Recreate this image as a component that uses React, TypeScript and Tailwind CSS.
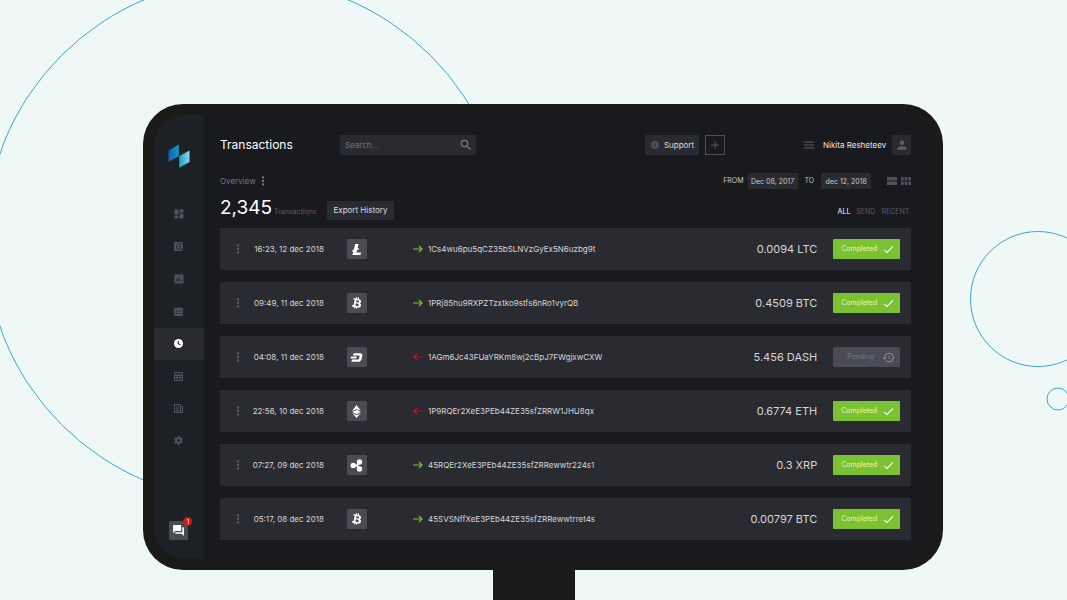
import {
  MdAssessment,
  MdCheck,
  MdDashboard,
  MdError,
  MdForum,
  MdHistory,
  MdMenu,
  MdMoreVert,
  MdPerson,
  MdSearch,
} from "react-icons/md"
import { FaBtc, FaCog } from "react-icons/fa"

type Coin = "LTC" | "BTC" | "DASH" | "ETH" | "XRP"

type Transaction = {
  date: string
  coin: Coin
  incoming: boolean
  hash: string
  amount: string
  pending?: boolean
}

const transactions: Transaction[] = [
  { date: "16:23, 12 dec 2018", coin: "LTC", incoming: false, hash: "1Cs4wu6pu5qCZ35bSLNVzGyEx5N6uzbg9t", amount: "0.0094" },
  { date: "09:49, 11 dec 2018", coin: "BTC", incoming: false, hash: "1PRj85hu9RXPZTzxtko9stfs6nRo1vyrQB", amount: "0.4509" },
  { date: "04:08, 11 dec 2018", coin: "DASH", incoming: true, hash: "1AGm6Jc43FUaYRKm8wj2cBpJ7FWgjxwCXW", amount: "5.456", pending: true },
  { date: "22:56, 10 dec 2018", coin: "ETH", incoming: true, hash: "1P9RQEr2XeE3PEb44ZE35sfZRRW1JHU8qx", amount: "0.6774" },
  { date: "07:27, 09 dec 2018", coin: "XRP", incoming: false, hash: "45RQEr2XeE3PEb44ZE35sfZRRewwtr224s1", amount: "0.3" },
  { date: "05:17, 08 dec 2018", coin: "BTC", incoming: false, hash: "45SVSNffXeE3PEb44ZE35sfZRRewwtrret4s", amount: "0.00797" },
]

function Logo() {
  return (
    <svg viewBox="0 0 22 24" className="h-6 w-[22px]" aria-hidden="true">
      <defs>
        <linearGradient id="logo-left" x1="0" x2="1">
          <stop offset="0" stopColor="#0d5fb4" />
          <stop offset="1" stopColor="#0f9cc4" />
        </linearGradient>
        <linearGradient id="logo-right" x1="0" x2="1">
          <stop offset="0" stopColor="#12a3c6" />
          <stop offset="1" stopColor="#8fd6df" />
        </linearGradient>
      </defs>
      <path d="M0.500 6.500 10.800 0.500V12L0.500 18z" fill="url(#logo-left)" />
      <path d="M11.200 12 21.500 6.500V18L11.200 23.700z" fill="url(#logo-right)" />
    </svg>
  )
}

function WalletIcon() {
  return (
    <svg viewBox="0 0 18 18" className="size-[9px]" fill="currentColor" aria-hidden="true">
      <path d="M2 0h14a2 2 0 0 1 2 2v1H8a3 3 0 0 0-3 3v6a3 3 0 0 0 3 3h10v1a2 2 0 0 1-2 2H2a2 2 0 0 1-2-2V2a2 2 0 0 1 2-2z" />
      <path fillRule="evenodd" d="M8 4.500h10v9H8a1.500 1.500 0 0 1-1.500-1.500V6A1.500 1.500 0 0 1 8 4.500zM12 7a2 2 0 1 0 0 4 2 2 0 0 0 0-4z" />
    </svg>
  )
}

function CalendarIcon() {
  return (
    <svg viewBox="0 0 18 18" className="size-[9px]" fill="currentColor" aria-hidden="true">
      <path
        fillRule="evenodd"
        d="M3 0h2v2h3V0h2v2h3V0h2v2h1a2 2 0 0 1 2 2v12a2 2 0 0 1-2 2H2a2 2 0 0 1-2-2V4a2 2 0 0 1 2-2h1zM3 7v2h3V7zm5 0v2h2V7zm4 0v2h3V7zM3 12v2h3v-2zm5 0v2h2v-2zm4 0v2h3v-2z"
      />
    </svg>
  )
}

function ClockIcon() {
  return (
    <svg viewBox="0 0 18 18" className="size-[9px]" aria-hidden="true">
      <circle cx="9" cy="9" r="9" fill="currentColor" />
      <path d="M8.500 4v5.500l4.500 2" fill="none" stroke="#2a2b30" strokeWidth="2.200" />
    </svg>
  )
}

function TableIcon() {
  return (
    <svg viewBox="0 0 18 18" className="size-[9px]" fill="currentColor" aria-hidden="true">
      <path fillRule="evenodd" d="M0 0h18v18H0zM2 2v3h14V2zm0 6v2h3V8zm5 0v2h4V8zm6 0v2h3V8zM2 12v4h3v-4zm5 0v4h4v-4zm6 0v4h3v-4z" />
    </svg>
  )
}

function NewsIcon() {
  return (
    <svg viewBox="0 0 18 18" className="size-[9px]" fill="none" stroke="currentColor" strokeWidth="2.200" aria-hidden="true">
      <path d="M13 6V2L11 1H1v16h14a2 2 0 0 0 2-2V6h-4v9a2 2 0 0 0 2 2M4 6h6M4 10h6M4 13.500h6" />
    </svg>
  )
}

function ListViewIcon() {
  return (
    <svg viewBox="0 0 10 8" className="h-2 w-2.5" fill="currentColor" aria-hidden="true">
      <path d="M0 0h10v3.500H0zM0 4.500h10V8H0z" />
    </svg>
  )
}

function GridViewIcon() {
  return (
    <svg viewBox="0 0 10 8" className="h-2 w-2.5" fill="currentColor" aria-hidden="true">
      <path d="M0 0h2.700v3.500H0zM3.600 0h2.800v3.500H3.600zM7.300 0H10v3.500H7.300zM0 4.500h2.700V8H0zM3.600 4.500h2.800V8H3.600zM7.300 4.500H10V8H7.300z" />
    </svg>
  )
}

const navItems = [
  { label: "Dashboard", icon: <MdDashboard className="size-3" /> },
  { label: "Wallet", icon: <WalletIcon /> },
  { label: "Statistics", icon: <MdAssessment className="size-3" /> },
  { label: "Calendar", icon: <CalendarIcon /> },
  { label: "History", icon: <ClockIcon />, active: true },
  { label: "Table", icon: <TableIcon /> },
  { label: "News", icon: <NewsIcon /> },
  { label: "Settings", icon: <FaCog className="size-[9px]" /> },
]

function CoinIcon({ coin }: { coin: Coin }) {
  if (coin === "BTC") return <FaBtc className="size-3 rotate-12" aria-label="Bitcoin" />
  return (
    <svg viewBox="0 0 24 24" className="size-[13px]" fill="currentColor" role="img" aria-label={coin}>
      {coin === "LTC" && <path d="M9.500 2h6.500l-2.200 8 2.700-1-.9 3.500-2.700 1L12 17.500h8.500L19.300 22H4.500l1.700-6.500-2.400.9.900-3.500 2.400-.9z" />}
      {coin === "DASH" && (
        <>
          <path d="M6.500 4h12c3.500 0 5 2 4.200 5l-1.500 6c-.8 3-3 5-6.200 5H2.500l1.200-4.500h11c1 0 1.500-.4 1.800-1.400l1.100-4.200c.2-1-.1-1.400-1.100-1.400h-11z" />
          <path d="M3 10h9.500l-1 4H1c.3-2 .8-3.500 2-4z" />
        </>
      )}
      {coin === "ETH" && (
        <>
          <path d="M12 0 20 10.500 12 8 4 10.500z" />
          <path d="M12 9.300 20 12.300 12 17 4 12.300z" />
          <path d="M4 14.500 12 19 20 14.500 12 24z" />
        </>
      )}
      {coin === "XRP" && (
        <>
          <circle cx="6" cy="12" r="5" />
          <circle cx="17.500" cy="5.500" r="5" />
          <circle cx="17.500" cy="18.500" r="5" />
          <path d="M6 10h6l3-6 4 3-4 5 4 5-4 3-3-6H6z" />
        </>
      )}
    </svg>
  )
}

function Arrow({ incoming }: { incoming: boolean }) {
  return incoming ? (
    <svg viewBox="0 0 10 8" className="h-2 w-2.5 shrink-0 text-[#c1122f]" fill="none" stroke="currentColor" strokeWidth="1.200" role="img" aria-label="Received">
      <path d="M10 4H1M4 1 1 4l3 3" />
    </svg>
  ) : (
    <svg viewBox="0 0 10 8" className="h-2 w-2.5 shrink-0 text-[#7ac231]" fill="none" stroke="currentColor" strokeWidth="1.200" role="img" aria-label="Sent">
      <path d="M0 4h9M6 1l3 3-3 3" />
    </svg>
  )
}

function Status({ pending }: { pending?: boolean }) {
  return pending ? (
    <span className="flex h-5 w-[67px] items-center justify-between rounded-[1px] bg-[#4a4b53] pr-[5px] pl-3.5 text-[7px] text-[#74738a]">
      Pending
      <MdHistory className="size-[13px] text-[#8a899b]" />
    </span>
  ) : (
    <span className="flex h-5 w-[67px] items-center justify-between rounded-[1px] bg-[#7ac231] pr-[5px] pl-2 text-[7px] text-[#e4f5cf]">
      Completed
      <MdCheck className="size-[13px] text-white" />
    </span>
  )
}

function Sidebar() {
  return (
    <aside className="flex w-[50px] shrink-0 flex-col items-center bg-[#1d2125] pt-[29px] pb-[19px]">
      <a href="#" aria-label="Home">
        <Logo />
      </a>
      <nav className="mt-[30px] flex h-[259px] w-full flex-col">
        {navItems.map((item) => (
          <a
            key={item.label}
            href="#"
            aria-label={item.label}
            className={
              item.active
                ? "flex flex-1 items-center justify-center bg-[#2a2b30] text-white"
                : "flex flex-1 items-center justify-center text-[#50505f]"
            }
          >
            {item.icon}
          </a>
        ))}
      </nav>
      <button aria-label="Messages" className="relative mt-auto flex size-[19px] items-center justify-center rounded-[1px] bg-[#4a4b53] text-white">
        <MdForum className="size-[13px]" />
        <span className="absolute -top-1 -right-1 flex size-[9px] items-center justify-center rounded-full bg-[#d0190f] text-[6px]">1</span>
      </button>
    </aside>
  )
}

function Header() {
  return (
    <header className="flex h-5 items-center">
      <h1 className="w-[120px] text-[12px] text-white">Transactions</h1>
      <label className="flex h-5 w-[136px] items-center justify-between rounded-[1px] bg-[#2a2b30] pr-[3px] pl-[5px]">
        <input type="text" aria-label="Search" placeholder="Search..." className="w-24 bg-transparent text-[8px] outline-none placeholder:text-[#74728a]" />
        <MdSearch className="size-3.5 text-[#7b7990]" />
      </label>
      <div className="ml-auto flex items-center">
        <button className="flex h-5 w-[54px] items-center justify-center gap-1 rounded-[1px] bg-[#2a2b30] text-[8px] text-[#dcdce0]">
          <MdError className="size-2.5 text-[#4d4d5b]" />
          Support
        </button>
        <button aria-label="Add" className="ml-1.5 flex size-5 items-center justify-center border border-[#4d4d5b]">
          <svg viewBox="0 0 10 10" className="size-2" stroke="#5a5a69" strokeWidth="1.200" aria-hidden="true">
            <path d="M5 0v10M0 5h10" />
          </svg>
        </button>
        <button aria-label="Menu" className="ml-[77px]">
          <MdMenu className="size-3.5 text-[#50505f]" />
        </button>
        <span className="ml-[7px] text-[8px] text-[#e6e6ea]">Nikita Resheteev</span>
        <span className="ml-1.5 flex h-5 w-[19px] items-center justify-center rounded-[1px] bg-[#2a2b30]">
          <MdPerson className="size-3.5 text-[#5a5a69]" />
        </span>
      </div>
    </header>
  )
}

function Filters() {
  return (
    <>
      <div className="mt-[18px] flex h-4 items-center justify-between">
        <div className="flex items-center text-[8px] text-[#74728a]">
          Overview
          <button aria-label="Overview options">
            <MdMoreVert className="size-3.5" />
          </button>
        </div>
        <div className="flex items-center text-[7px] text-[#c9c9cf]">
          <label htmlFor="from">FROM</label>
          <input id="from" type="text" defaultValue="Dec 08, 2017" className="ml-1 h-4 w-[50px] rounded-[1px] bg-[#2a2b30] text-center outline-none" />
          <label htmlFor="to" className="ml-[7px]">TO</label>
          <input id="to" type="text" defaultValue="dec 12, 2018" className="ml-[7px] h-4 w-[50px] rounded-[1px] bg-[#2a2b30] text-center outline-none" />
          <button aria-label="List view" className="ml-4 text-[#50505f]">
            <ListViewIcon />
          </button>
          <button aria-label="Grid view" className="ml-1 text-[#50505f]">
            <GridViewIcon />
          </button>
        </div>
      </div>
      <div className="mt-[11px] flex h-5 items-center">
        <div className="flex w-[107px] items-baseline gap-0.5 pb-1 text-[7px] text-[#5c5b6e]">
          <span className="text-[19px] leading-5 text-white">2,345</span>
          Transactions
        </div>
        <button className="h-[19px] w-[67px] rounded-[1px] bg-[#2a2b30] text-[8px] text-[#dcdce0]">Export History</button>
        <div className="mt-1 mr-0.5 ml-auto flex gap-1.5 text-[7px] text-[#5c5b6e]">
          <button className="text-white">ALL</button>
          <button>SEND</button>
          <button>RECENT</button>
        </div>
      </div>
    </>
  )
}

function TransactionTable() {
  return (
    <table className="-mt-1 w-full table-fixed border-separate border-spacing-x-0 border-spacing-y-3 text-[8px] text-[#d6d6da]">
      <tbody>
        {transactions.map((tx) => (
          <tr key={tx.hash} className="h-[42px] bg-[#2a2b30]">
            <td className="w-7 rounded-l-[1px] pl-[11px]">
              <button aria-label="Transaction options" className="block">
                <MdMoreVert className="size-3.5 text-[#5a5a69]" />
              </button>
            </td>
            <td className="w-[76px] text-right whitespace-nowrap">{tx.date}</td>
            <td className="w-[89px] pl-[23px]">
              <span className="flex size-5 items-center justify-center rounded-[1px] bg-[#4a4b53] text-white">
                <CoinIcon coin={tx.coin} />
              </span>
            </td>
            <td>
              <span className="flex items-center gap-[5px]">
                <Arrow incoming={tx.incoming} />
                {tx.hash}
              </span>
            </td>
            <td className="w-[120px] text-right text-[11px]">
              {tx.amount} {tx.coin}
            </td>
            <td className="w-[94px] rounded-r-[1px] pl-4">
              <Status pending={tx.pending} />
            </td>
          </tr>
        ))}
      </tbody>
    </table>
  )
}

export default function App() {
  return (
    <div className="relative min-h-screen overflow-hidden bg-[#f0f7f7] pt-[104px] font-['Inter',sans-serif]">
      <svg className="absolute inset-0 size-full" fill="none" stroke="#35a7dc" aria-hidden="true">
        <circle cx="246" cy="240" r="261" />
        <circle cx="1038" cy="299" r="67.500" />
        <circle cx="1058" cy="399" r="11" />
      </svg>
      <div className="relative ml-[13.4%] w-3/4 rounded-[40px] bg-[#1a1a19] p-[11px]">
        <div className="flex overflow-hidden rounded-[30px] bg-[#191a1d]">
          <Sidebar />
          <main className="min-w-0 flex-1 pt-5 pr-[21px] pb-[7px] pl-4">
            <Header />
            <Filters />
            <TransactionTable />
          </main>
        </div>
      </div>
      <div className="relative mx-auto h-[30px] w-[82px] bg-[#1a1a19]" />
    </div>
  )
}
